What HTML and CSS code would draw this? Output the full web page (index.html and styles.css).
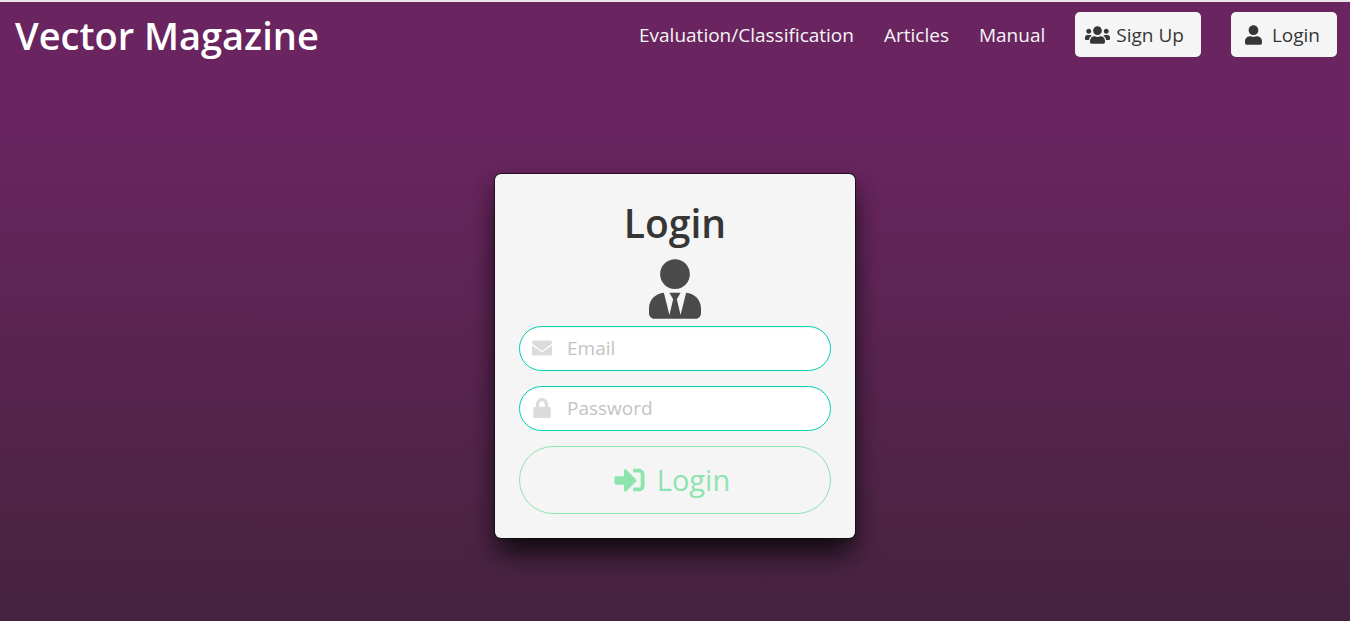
FILE: index.html
```html
<!DOCTYPE html>
<html lang="en">
<head>
<meta charset="utf-8">
<meta name="viewport" content="width=device-width, initial-scale=1">
<title>Vector Magazine</title>
<link rel="stylesheet" href="styles.css">
</head>
<body>
<header class="navbar">
  <a class="brand" href="#">Vector Magazine</a>
  <nav class="menu">
    <a class="menu-link" href="#">Evaluation/Classification</a>
    <a class="menu-link" href="#">Articles</a>
    <a class="menu-link" href="#">Manual</a>
    <a class="menu-button" href="#">
      <svg class="icon-users" viewBox="0 0 640 512" aria-hidden="true"><path d="M96 224c35.300 0 64-28.700 64-64s-28.700-64-64-64-64 28.700-64 64 28.700 64 64 64zm448 0c35.300 0 64-28.700 64-64s-28.700-64-64-64-64 28.700-64 64 28.700 64 64 64zm32 32h-64c-17.600 0-33.500 7.100-45.100 18.600 40.300 22.100 68.900 62 75.100 109.400h66c17.700 0 32-14.300 32-32v-32c0-35.300-28.700-64-64-64zm-256 0c61.900 0 112-50.100 112-112S381.900 32 320 32 208 82.100 208 144s50.100 112 112 112zm76.800 32h-8.300c-20.800 10-43.900 16-68.500 16s-47.600-6-68.500-16h-8.300C179.600 288 128 339.600 128 403.200V432c0 26.500 21.500 48 48 48h288c26.500 0 48-21.500 48-48v-28.800c0-63.600-51.600-115.200-115.200-115.200zm-223.700-13.400C161.500 263.100 145.600 256 128 256H64c-35.300 0-64 28.700-64 64v32c0 17.700 14.300 32 32 32h65.900c6.300-47.400 34.900-87.300 75.200-109.400z"/></svg>
      <span>Sign Up</span>
    </a>
    <a class="menu-button menu-button-login" href="#">
      <svg class="icon-user" viewBox="0 0 448 512" aria-hidden="true"><path d="M224 256c70.700 0 128-57.300 128-128S294.700 0 224 0 96 57.300 96 128s57.300 128 128 128zm89.600 32h-16.700c-22.200 10.200-46.900 16-72.900 16s-50.600-5.800-72.900-16h-16.700C60.200 288 0 348.200 0 422.400V464c0 26.500 21.500 48 48 48h352c26.500 0 48-21.500 48-48v-41.600c0-74.200-60.200-134.400-134.400-134.400z"/></svg>
      <span>Login</span>
    </a>
  </nav>
</header>
<main class="hero">
  <form class="card">
    <h1 class="title">Login</h1>
    <svg class="avatar" viewBox="0 0 448 512" aria-hidden="true"><path d="M224 256c70.700 0 128-57.300 128-128S294.700 0 224 0 96 57.300 96 128s57.300 128 128 128zm95.800 32.600L272 480l-32-136 32-56h-96l32 56-32 136-47.800-191.400C56.900 292 0 350.300 0 422.400V464c0 26.500 21.500 48 48 48h352c26.500 0 48-21.500 48-48v-41.600c0-72.100-56.900-130.400-128.200-133.800z"/></svg>
    <div class="fields">
      <label class="field">
        <svg class="field-icon" viewBox="0 0 512 512" aria-hidden="true"><path d="M502.300 190.800c3.900-3.100 9.700-.2 9.700 4.700V400c0 26.500-21.500 48-48 48H48c-26.500 0-48-21.500-48-48V195.600c0-5 5.700-7.800 9.700-4.700 22.400 17.400 52.100 39.500 154.100 113.600 21.100 15.400 56.700 47.800 92.200 47.600 35.700.3 72-32.800 92.300-47.600 102-74.100 131.600-96.300 154-113.700zM256 320c23.200.4 56.600-29.200 73.400-41.400 132.700-96.300 142.800-104.700 173.400-128.700 5.800-4.500 9.200-11.500 9.200-18.900v-19c0-26.500-21.500-48-48-48H48c-26.500 0-48 21.500-48 48v19c0 7.400 3.400 14.300 9.200 18.900 30.600 23.900 40.700 32.400 173.400 128.700 16.800 12.200 50.200 41.800 73.400 41.400z"/></svg>
        <input class="input" type="email" placeholder="Email" aria-label="Email">
      </label>
      <label class="field">
        <svg class="field-icon" viewBox="-32 0 512 512" aria-hidden="true"><path d="M400 224h-24v-72C376 68.200 307.800 0 224 0S72 68.200 72 152v72H48c-26.500 0-48 21.500-48 48v192c0 26.500 21.500 48 48 48h352c26.500 0 48-21.500 48-48V272c0-26.500-21.500-48-48-48zm-104 0H152v-72c0-39.700 32.300-72 72-72s72 32.300 72 72v72z"/></svg>
        <input class="input" type="password" placeholder="Password" aria-label="Password">
      </label>
      <button class="submit" type="button">
        <svg class="icon-sign-in" viewBox="0 0 512 512" aria-hidden="true"><path d="M416 448h-84c-6.600 0-12-5.400-12-12v-40c0-6.600 5.400-12 12-12h84c17.700 0 32-14.300 32-32V160c0-17.700-14.300-32-32-32h-84c-6.600 0-12-5.400-12-12V76c0-6.600 5.400-12 12-12h84c53 0 96 43 96 96v192c0 53-43 96-96 96zm-47-201L201 79c-15-15-41-4.500-41 17v96H24c-13.300 0-24 10.700-24 24v96c0 13.300 10.700 24 24 24h136v96c0 21.500 26 32 41 17l168-168c9.300-9.400 9.300-24.600 0-34z"/></svg>
        <span>Login</span>
      </button>
    </div>
  </form>
</main>
</body>
</html>
```
FILE: styles.css
```css
* {
  box-sizing: border-box;
}

body {
  margin: 0;
  min-height: 100vh;
  display: flex;
  flex-direction: column;
  border-top: 2px solid #e8e4e8;
  background: #6a2560;
  color: #363636;
  font-family: "Segoe UI", "Open Sans", "Noto Sans", sans-serif;
  font-size: 19px;
}

svg {
  fill: currentColor;
  flex: none;
}

a {
  color: inherit;
  text-decoration: none;
}

.navbar {
  display: flex;
  align-items: center;
  justify-content: space-between;
  padding: 4px 13px 4px 15px;
  color: #f5f5f5;
}

.brand {
  color: #fff;
  font-size: 38px;
  font-weight: 600;
  line-height: 58px;
}

.menu {
  display: flex;
  align-items: center;
  gap: 30px;
  margin-bottom: 1px;
}

.menu-button {
  display: flex;
  align-items: center;
  gap: 6px;
  height: 45px;
  padding: 0 17px 0 10px;
  border-radius: 5px;
  background: #f5f5f5;
  color: #363636;
}

.menu-button-login {
  gap: 10px;
  padding-left: 14px;
}

.icon-users {
  width: 25px;
  height: 20px;
}

.icon-user {
  width: 17px;
  height: 20px;
}

.hero {
  flex: 1;
  display: flex;
  align-items: center;
  justify-content: center;
  padding: 24px;
  background: linear-gradient(#6a2560, #6a2560 10%, #45233f);
}

.card {
  display: flex;
  flex-direction: column;
  align-items: center;
  width: 100%;
  max-width: 360px;
  margin-top: 22px;
  padding: 24px;
  border-radius: 6px;
  background: #f5f5f5;
  box-shadow: 0 20px 26px -5px rgba(10, 10, 10, 0.85), 0 0 0 1px rgba(10, 10, 10, 0.7), 0 8px 20px rgba(10, 10, 10, 0.3);
}

.title {
  margin: 0;
  font-size: 39px;
  font-weight: 600;
  line-height: 50px;
}

.avatar {
  width: 52px;
  height: 60px;
  margin: 11px 0 7px;
  color: #4a4a4a;
}

.fields {
  display: flex;
  flex-direction: column;
  gap: 15px;
  width: 100%;
}

.field {
  display: flex;
  align-items: center;
  gap: 15px;
  height: 45px;
  padding: 0 12px;
  border: 1px solid #00d1b2;
  border-radius: 23px;
  background: #fff;
  box-shadow: inset 0 1px 2px rgba(10, 10, 10, 0.05);
}

.field-icon {
  width: 20px;
  height: 20px;
  color: #dbdbdb;
}

.input {
  flex: 1;
  min-width: 0;
  padding: 0;
  border: 0;
  outline: 0;
  background: transparent;
  color: #363636;
  font: inherit;
}

.input::placeholder {
  color: #c3c3c3;
  opacity: 1;
}

.submit {
  display: flex;
  align-items: center;
  justify-content: center;
  gap: 12px;
  height: 68px;
  padding: 0 20px 0 14px;
  border: 1px solid #8de4af;
  border-radius: 34px;
  background: transparent;
  color: #8de4af;
  font: inherit;
  font-size: 29px;
}

.icon-sign-in {
  width: 31px;
  height: 30px;
}
```
